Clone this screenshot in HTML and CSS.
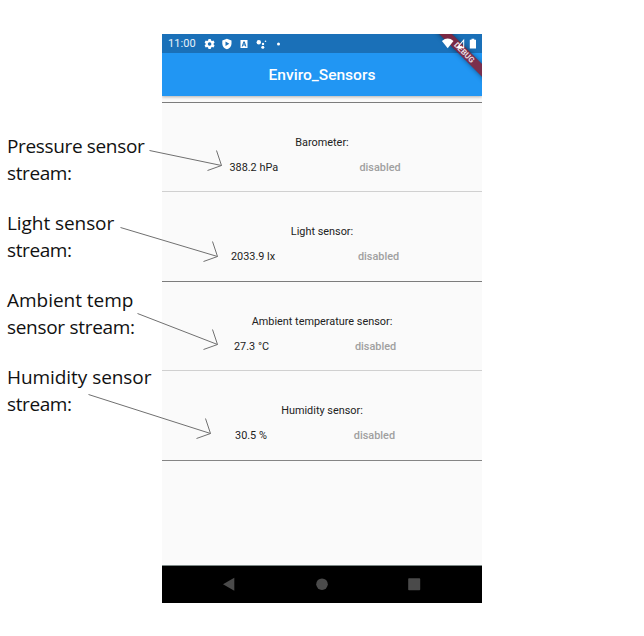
FILE: index.html
```html
<!DOCTYPE html>
<html lang="en">
<head>
<meta charset="utf-8">
<title>Enviro_Sensors</title>
<link rel="stylesheet" href="styles.css">
</head>
<body>
<main class="page">
  <aside class="notes">
    <p><span class="n1">Pressure sensor</span><br><span class="st">stream:</span></p>
    <p><span class="n2">Light sensor</span><br><span class="st">stream:</span></p>
    <p><span class="n3">Ambient temp</span><br><span class="n4">sensor stream:</span></p>
    <p><span class="n5">Humidity sensor</span><br><span class="st">stream:</span></p>
  </aside>
  <div class="phone">
    <div class="status">
      <span class="clock">11:00</span>
      <svg class="status-icons" viewBox="0 0 80 12" fill="#fff">
        <g transform="translate(5.6 6)">
          <path fill-rule="evenodd" d="M-1.1-5h2.2l.4 1.4 1 .6 1.4-.4 1.1 1.9-1 1v1l1 1-1.1 1.9-1.4-.4-1 .6-.4 1.4h-2.2l-.4-1.4-1-.6-1.4.4L-5 1.5l1-1v-1l-1-1 1.1-1.9 1.4.4 1-.6zM0-1.8a1.8 1.8 0 1 0 0 3.6 1.8 1.8 0 1 0 0-3.6z"/>
        </g>
        <path fill-rule="evenodd" d="M22.9.8l4.6 1.8v3.2c0 2.6-1.9 4.6-4.6 5.5-2.7-.9-4.6-2.9-4.6-5.5V2.600zM21.500 3.500v4.600l3.800-2.300z"/>
        <path fill-rule="evenodd" d="M36.500 2h7v8h-7zM39.400 3.500L37.700 8.500h1.100l.4-1h1.700l.4 1h1.100l-1.700-5zM40 4.900l.6 1.700h-1.200z"/>
        <circle cx="54.800" cy="4.300" r="2.200"/><circle cx="59" cy="5.900" r="1.200"/><circle cx="58.800" cy="9.300" r="1.500"/><circle cx="61.500" cy="3.200" r=".8"/>
        <circle cx="74.500" cy="6" r="1.500"/>
      </svg>
      <svg class="signal-icons" viewBox="0 0 36 12" fill="#fff">
        <path d="M.9 3Q6.700-1.800 12.500 3L6.700 10.200z"/>
        <path fill-rule="evenodd" d="M23.200.8v9.500h-8zM22.200 3.500l-3.600 4.300 3.600 1.500z"/>
        <path d="M28.800 1.800h1.700V.7h2.800v1.100H35v8.700h-6.200z"/>
      </svg>
    </div>
    <header class="appbar"><h1>Enviro_Sensors</h1></header>
    <div class="ribbon-clip"><div class="ribbon">DEBUG</div></div>
    <div class="content">
      <section class="sensor dark"><h2>Barometer:</h2><div class="row"><span>388.2 hPa</span><b>disabled</b></div></section>
      <section class="sensor tall"><h2>Light sensor:</h2><div class="row"><span>2033.9 lx</span><b>disabled</b></div></section>
      <section class="sensor dark"><h2>Ambient temperature sensor:</h2><div class="row"><span>27.3 °C</span><b>disabled</b></div></section>
      <section class="sensor tall last"><h2>Humidity sensor:</h2><div class="row"><span>30.5 %</span><b>disabled</b></div></section>
    </div>
    <nav class="navbar">
      <svg viewBox="0 0 320 37" fill="#4a4a4a">
        <path d="M61 18.200L72.300 11.700v13z"/><circle cx="160" cy="18.200" r="5.800"/><rect x="246.200" y="12.200" width="12" height="12" rx=".8"/>
      </svg>
    </nav>
  </div>
  <svg class="arrows" viewBox="0 0 644 636">
    <path d="M149.500 150.500L221.500 165.500M216.500 150.500L221.500 165.500L207.500 170.500"/>
    <path d="M120.500 227.500L217.500 256.500M212.500 241.500L217.500 256.500L203.500 261.500"/>
    <path d="M137.500 313.500L217.500 344.500M212.500 329.500L217.500 344.500L203.500 349.500"/>
    <path d="M88.500 394.500L210.500 433.500M205.500 418.500L210.500 433.500L196.500 438.500"/>
  </svg>
</main>
</body>
</html>
```
FILE: styles.css
```css
* { box-sizing: border-box; }
body { margin: 0; background: #fff; }
.page {
  position: relative;
  display: flex;
  width: 644px;
  height: 636px;
  overflow: hidden;
}
.notes {
  width: 162px;
  padding: 133px 0 0 7px;
  font: 400 19px/27px "Open Sans", "Noto Sans", sans-serif;
  color: #111;
  white-space: nowrap;
}
.notes p { margin: 0 0 23px; }
.n1 { letter-spacing: -.35px; }
.n2 { letter-spacing: -.07px; }
.n3 { letter-spacing: -.03px; }
.n4 { letter-spacing: -.3px; }
.n5 { letter-spacing: -.06px; }
.st { letter-spacing: -.4px; }
.phone {
  position: relative;
  display: flex;
  flex-direction: column;
  width: 320px;
  height: 569px;
  margin-top: 34px;
  background: #fafafa;
  font-family: Roboto, sans-serif;
}
.status {
  display: flex;
  align-items: center;
  height: 19px;
  padding: 0 5px 0 6px;
  background: #1a70b8;
  color: #e8f1f8;
}
.clock { width: 36px; font-size: 11px; letter-spacing: .1px; }
.status-icons { width: 80px; height: 12px; }
.signal-icons { position: relative; z-index: 2; width: 36px; height: 12px; margin-left: auto; }
.appbar {
  display: flex;
  align-items: center;
  justify-content: center;
  height: 43px;
  background: #2196f3;
  box-shadow: 0 1px 3px rgba(0, 0, 0, .3);
  clip-path: inset(0 0 -8px 0);
}
.appbar h1 { margin: 0; font-size: 15.560px; font-weight: 500; letter-spacing: 0; color: #fff; }
.ribbon-clip { position: absolute; top: 0; right: 0; z-index: 1; width: 60px; height: 60px; overflow: hidden; }
.ribbon {
  position: absolute;
  top: 14px;
  left: 3px;
  width: 78px;
  height: 9.200px;
  background: rgba(141, 28, 45, .84);
  box-shadow: 0 0 5px rgba(0, 0, 0, .45);
  transform: rotate(45deg);
  color: #e6dce0;
  font-size: 7.900px;
  font-weight: 700;
  line-height: 9.200px;
  text-align: center;
}
.content { flex: 1; padding-top: 6px; }
.sensor { height: 89px; padding-top: 32px; border-top: 1px solid #d0d0d0; color: #222; }
.sensor.dark { border-top-color: #7c7c7c; }
.sensor.tall { height: 90px; padding-top: 32.400px; }
.sensor.last { height: 91px; border-bottom: 1px solid #858585; }
.sensor h2 { margin: 0; font-size: 10.890px; line-height: 15px; font-weight: 400; letter-spacing: 0; text-align: center; }
.row { display: flex; justify-content: space-evenly; margin-top: 10px; font-size: 10.890px; line-height: 15px; }
.row span { letter-spacing: 0; }
.row b { width: 69px; font-weight: 500; color: #a0a0a0; text-align: center; letter-spacing: 0; }
.navbar { height: 38px; background: #000; border-top: 1px solid #7c8886; }
.navbar svg { display: block; width: 320px; height: 37px; }
.arrows { position: absolute; inset: 0; width: 644px; height: 636px; fill: none; stroke: #707070; stroke-width: 1; }
```
